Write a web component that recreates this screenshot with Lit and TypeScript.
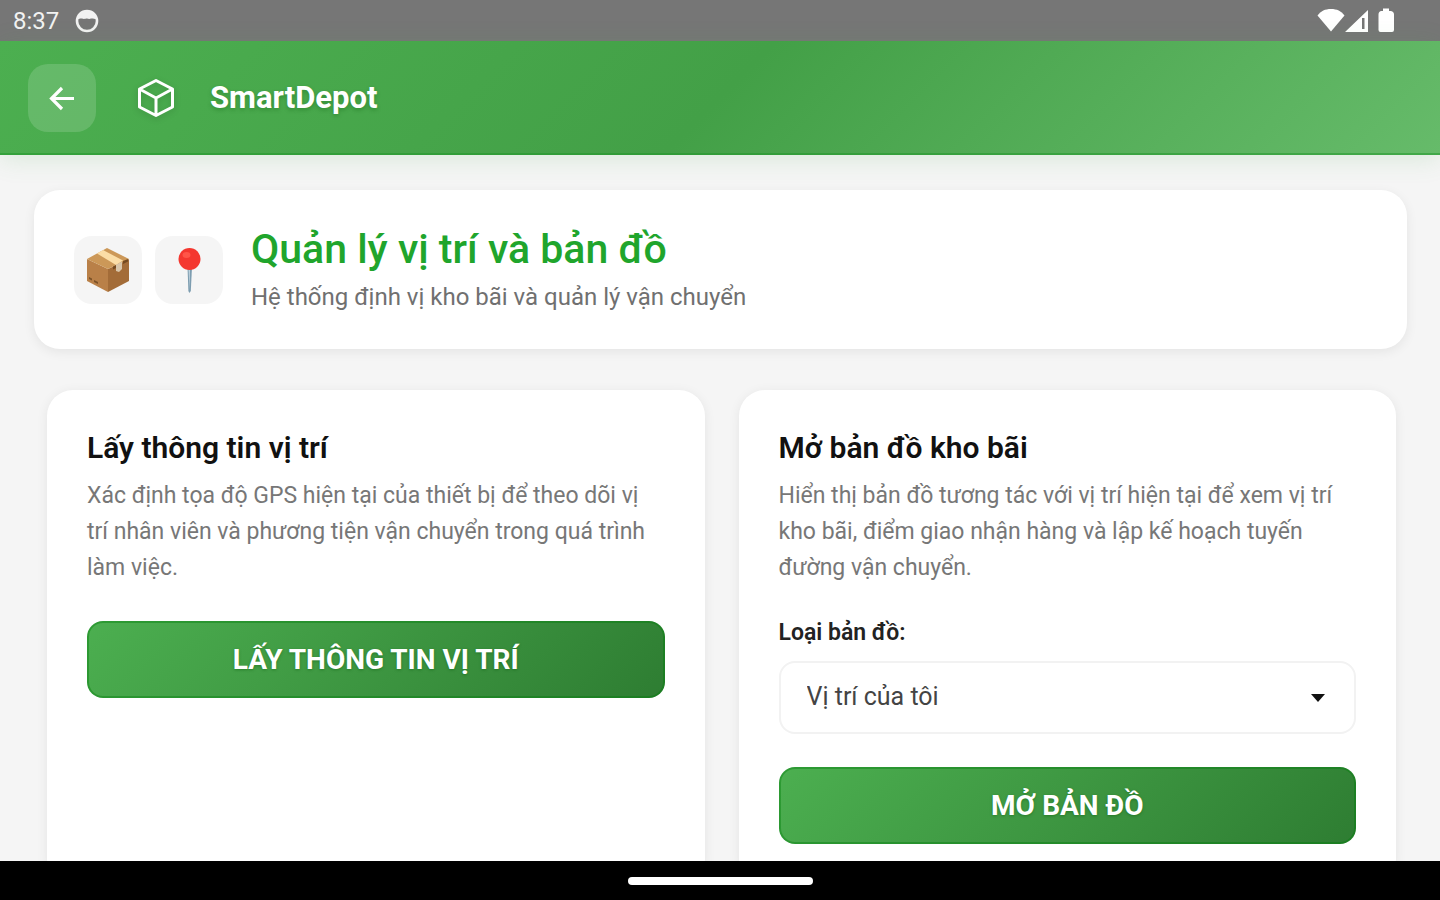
import { LitElement, html, css, svg } from "lit";
import { customElement, property } from "lit/decorators.js";

@customElement("status-bar")
export class StatusBar extends LitElement {
  static styles = css`
    :host {
      display: flex;
      align-items: center;
      justify-content: space-between;
      height: 41px;
      padding: 0 45px 0 13px;
      box-sizing: border-box;
      background: #767676;
      color: #fff;
      font-size: 24px;
    }
    .group {
      display: flex;
      align-items: center;
      gap: 16px;
    }
    .signals {
      gap: 0;
    }
    .time {
      color: #f2f2f2;
    }
    svg {
      display: block;
    }
  `;

  render() {
    return html`
      <div class="group">
        <span class="time">8:37</span>
        <svg width="24" height="24" viewBox="0 0 24 24" aria-hidden="true">
          <circle cx="12" cy="12" r="10" fill="none" stroke="#f2f2f2" stroke-width="2.6" />
          <path d="M2 10C3 5 7 1.500 12 1.500S21 5 22 10C20 10.500 18 9 16 9.500C14 10.500 13 9.500 12 9.500C11 9.500 9 10.500 7 9.500C5 9 4 10.500 2 10Z" fill="#f2f2f2" />
        </svg>
      </div>
      <div class="group signals">
        <svg width="78" height="26" viewBox="0 0 78 26" fill="#fff" aria-hidden="true">
          <path d="M0.500 7.500C4 3 8 1 14 1S24 3 27.500 7.500L14 23.500Z" />
          <path fill-rule="evenodd" d="M28 24L51 2V24ZM45 10V21H47.500V10Z" />
          <path d="M66 0.500H72V3H74Q77 3.500 77 6.500V22Q77 24 75 24H63.500Q61.500 24 61.500 22V6.500Q61.500 3.500 64 3H66Z" />
        </svg>
      </div>
    `;
  }
}

@customElement("app-header")
export class AppHeader extends LitElement {
  static styles = css`
    :host {
      display: flex;
      align-items: center;
      height: 114px;
      padding: 0 28px;
      box-sizing: border-box;
      background: linear-gradient(135deg, #4caf50 0%, #43a047 50%, #66bb6a 100%);
      box-shadow:
        inset 0 -2px 0 rgba(30, 150, 40, 0.5),
        0 4px 24px rgba(76, 175, 80, 0.16);
      color: #fff;
    }
    .back {
      display: grid;
      place-items: center;
      width: 68px;
      height: 68px;
      margin: 0 40px 0 0;
      padding: 0;
      border: 0;
      border-radius: 20px;
      background: rgba(255, 255, 255, 0.15);
      color: inherit;
    }
    .logo {
      margin-right: 34px;
      filter: drop-shadow(0 2px 3px rgba(0, 0, 0, 0.15));
    }
    .title {
      margin: 0;
      font-size: 31px;
      font-weight: 700;
      line-height: 40px;
      text-shadow: 0 2px 4px rgba(0, 80, 0, 0.3);
    }
  `;

  render() {
    return html`
      <button class="back" type="button" aria-label="Quay lại">
        <svg width="28" height="28" viewBox="0 0 28 28" fill="none" stroke="#fff" stroke-width="3.200" aria-hidden="true">
          <path d="M26 14.500H4M14 4L3.500 14.500L14 25" />
        </svg>
      </button>
      <svg class="logo" width="40" height="42" viewBox="0 0 40 42" fill="none" stroke="#fff" stroke-width="3" stroke-linejoin="round" aria-hidden="true">
        <path d="M20 3.500L36.500 12V30L20 38.500L3.500 30V12ZM3.500 12L20 21L36.500 12M20 21V38.500" />
      </svg>
      <h1 class="title">SmartDepot</h1>
    `;
  }
}

const parcel = svg`
  <path d="M2 12L23 22V45L2 34Z" fill="#b98048" />
  <path d="M23 22L44 12V34L23 45Z" fill="#a36c38" />
  <path d="M2 12L22 1L44 12L23 22Z" fill="#cc9858" />
  <path d="M12 6.500L18 3L38 13.500L31 18Z" fill="#fbdda6" />
  <path d="M31 18L37 14.500V22L34 25L31 24Z" fill="#d9c6aa" />
  <path d="M28 19.500L31 18V21L28 22.500ZM38 14L43 12V14.500L38 17Z" fill="#754a20" />
  <path d="M4 30L7 31.500V33.500L4 32ZM9 33L13 35V37L9 35Z" fill="#7c5228" />
`;

const pushpin = svg`
  <path d="M21.500 20H26L24.800 44L23.400 46L22.400 44Z" fill="#7d9db0" />
  <path d="M22.500 21H24L23.500 43Z" fill="#c3d5df" />
  <circle cx="23.500" cy="12" r="11" fill="#f4372f" />
  <ellipse cx="20.500" cy="8" rx="4" ry="3" fill="#ff5548" />
`;

@customElement("page-intro")
export class PageIntro extends LitElement {
  static styles = css`
    :host {
      display: flex;
      align-items: center;
      gap: 28px;
      padding: 35px 40px 34px;
      border-radius: 26px;
      background: #fff;
      box-shadow: 0 3px 12px rgba(0, 0, 0, 0.07);
    }
    .icons {
      display: flex;
      gap: 13px;
    }
    .tile {
      display: grid;
      place-items: center;
      width: 68px;
      height: 68px;
      border-radius: 18px;
      background: #f5f5f5;
    }
    .heading {
      margin: 0;
      color: #20a52c;
      font-size: 41px;
      font-weight: 500;
      line-height: 48px;
    }
    .sub {
      margin: 6px 0 0;
      color: #707070;
      font-size: 24px;
      line-height: 36px;
    }
  `;

  render() {
    return html`
      <div class="icons">
        <div class="tile">
          <svg width="46" height="46" viewBox="0 0 46 46" aria-hidden="true">${parcel}</svg>
        </div>
        <div class="tile">
          <svg width="46" height="46" viewBox="0 0 46 46" aria-hidden="true">${pushpin}</svg>
        </div>
      </div>
      <div>
        <h2 class="heading">Quản lý vị trí và bản đồ</h2>
        <p class="sub">Hệ thống định vị kho bãi và quản lý vận chuyển</p>
      </div>
    `;
  }
}

@customElement("action-card")
export class ActionCard extends LitElement {
  @property() heading = "";
  @property() text = "";
  @property() action = "";
  @property({ type: Array }) options: string[] = [];

  static styles = css`
    :host {
      display: block;
      padding: 40px;
      border-radius: 26px;
      background: #fff;
      box-shadow: 0 2px 12px rgba(0, 0, 0, 0.07);
    }
    .heading {
      margin: 0;
      color: #111;
      font-size: 30px;
      font-weight: 600;
      line-height: 36px;
    }
    .text {
      margin: 12px 0 35px;
      color: #777;
      font-size: 23px;
      line-height: 36px;
    }
    .label {
      display: block;
      margin-bottom: 16px;
      color: #222;
      font-size: 23px;
      font-weight: 600;
      line-height: 24px;
    }
    .field {
      display: grid;
      align-items: center;
      margin-bottom: 33px;
    }
    .select,
    .arrow {
      grid-area: 1 / 1;
    }
    .select {
      appearance: none;
      width: 100%;
      height: 73px;
      padding: 0 26px 2px;
      border: 2px solid #f2f2f2;
      border-radius: 16px;
      background: #fff;
      color: #444;
      font: inherit;
      font-size: 25px;
    }
    .arrow {
      justify-self: end;
      margin-right: 31px;
      pointer-events: none;
    }
    .action {
      display: block;
      width: 100%;
      height: 77px;
      padding: 0;
      border: 2px solid rgba(0, 125, 10, 0.4);
      border-radius: 16px;
      background: linear-gradient(135deg, #4caf50, #2e7d32) border-box;
      color: #fff;
      font: inherit;
      font-size: 28px;
      font-weight: 700;
      text-shadow: 0 1px 3px rgba(0, 80, 0, 0.4);
    }
  `;

  render() {
    return html`
      <h3 class="heading">${this.heading}</h3>
      <p class="text">${this.text}</p>
      ${this.options.length
        ? html`
            <label class="label" for="kind">Loại bản đồ:</label>
            <div class="field">
              <select class="select" id="kind">
                ${this.options.map((o) => html`<option>${o}</option>`)}
              </select>
              <svg class="arrow" width="14" height="8" viewBox="0 0 14 8" aria-hidden="true">
                <path d="M0 0H14L7 8Z" fill="#111" />
              </svg>
            </div>
          `
        : null}
      <button class="action" type="button">${this.action}</button>
    `;
  }
}

@customElement("app-root")
export class AppRoot extends LitElement {
  static styles = css`
    :host {
      display: flex;
      flex-direction: column;
      height: 100vh;
      background: #f5f5f5;
      font-family: Roboto, "Noto Sans", sans-serif;
    }
    .content {
      flex: 1;
      min-height: 0;
      overflow: hidden;
      padding: 35px 33px 0 34px;
    }
    .cards {
      display: grid;
      grid-template-columns: 1fr 1fr;
      gap: 34px;
      margin: 41px 11px 0 13px;
    }
    .nav {
      display: grid;
      place-items: center;
      height: 39px;
      background: #000;
    }
    .handle {
      width: 185px;
      height: 8px;
      border-radius: 4px;
      background: #fff;
    }
  `;

  render() {
    return html`
      <status-bar></status-bar>
      <app-header></app-header>
      <main class="content">
        <page-intro></page-intro>
        <div class="cards">
          <action-card
            heading="Lấy thông tin vị trí"
            text="Xác định tọa độ GPS hiện tại của thiết bị để theo dõi vị trí nhân viên và phương tiện vận chuyển trong quá trình làm việc."
            action="LẤY THÔNG TIN VỊ TRÍ"
          ></action-card>
          <action-card
            heading="Mở bản đồ kho bãi"
            text="Hiển thị bản đồ tương tác với vị trí hiện tại để xem vị trí kho bãi, điểm giao nhận hàng và lập kế hoạch tuyến đường vận chuyển."
            action="MỞ BẢN ĐỒ"
            .options=${["Vị trí của tôi"]}
          ></action-card>
        </div>
      </main>
      <div class="nav"><div class="handle"></div></div>
    `;
  }
}
